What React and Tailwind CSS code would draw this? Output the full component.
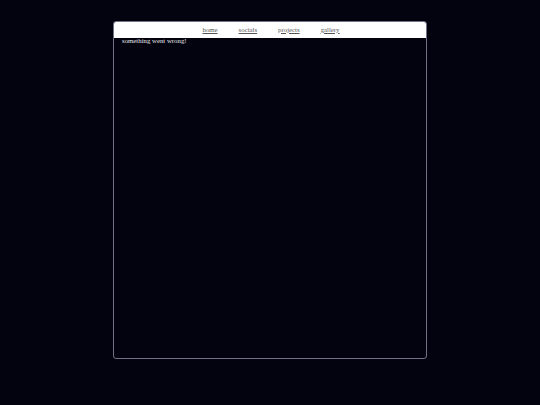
export default function App() {
  return (
    <div className="w-[540px] h-[405px] bg-[#03030f] overflow-hidden pt-[21px]" style={{ fontFamily: '"Liberation Serif", serif' }}>
      <div className="mx-auto w-[314px] h-[338px] border border-[#6f7284] rounded-[3px] overflow-hidden flex flex-col">
        <div className="h-[16px] bg-white flex items-center justify-center gap-[21px] pl-[2px]">
          <a className="text-[6.8px] text-[#555] underline">home</a>
          <a className="text-[6.8px] text-[#555] underline">socials</a>
          <a className="text-[6.8px] text-[#555] underline">projects</a>
          <a className="text-[6.8px] text-[#555] underline">gallery</a>
        </div>
        <div className="pl-[8px] -mt-[1px] text-[6.8px] leading-[8px] text-[#e6e6ea]">something went wrong!</div>
      </div>
    </div>
  );
}
